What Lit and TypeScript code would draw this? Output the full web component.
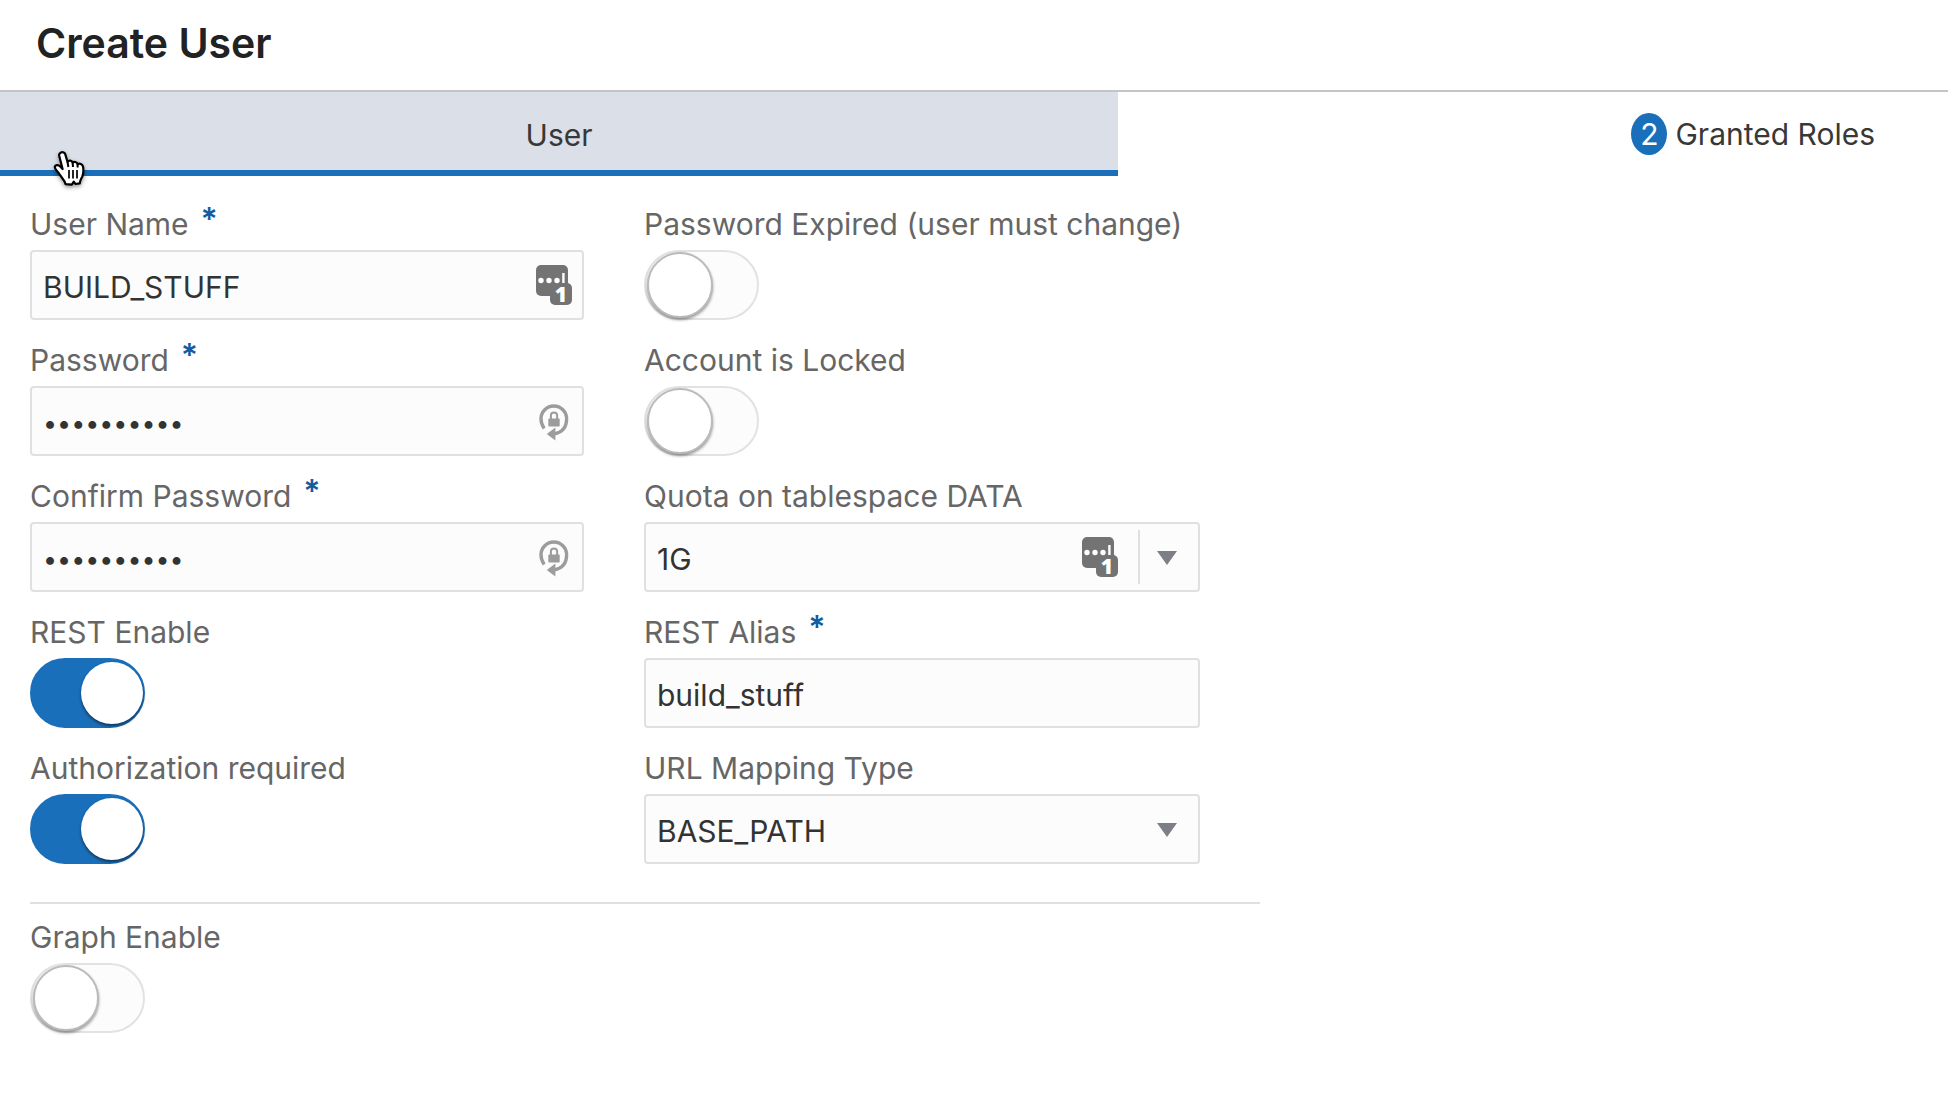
import { LitElement, html, css, svg, nothing } from "lit";
import { customElement, property, state } from "lit/decorators.js";
import { classMap } from "lit/directives/class-map.js";

const countIcon = html`
  <svg class="icon" width="36" height="50" viewBox="0 -5 36 50" aria-hidden="true">
    <rect x="0" y="0" width="32" height="31" rx="5" fill="#737373" />
    <rect x="14" y="18" width="22" height="22" rx="5" fill="#737373" />
    ${[5, 13, 21].map((x) => svg`<circle cx=${x} cy="15.5" r="2.7" fill="#fff" />`)}
    <rect x="26.2" y="8" width="2.4" height="10" fill="#fff" />
    <text class="icon-count" x="25" y="37" text-anchor="middle" fill="#fff">1</text>
  </svg>
`;

const lockIcon = html`
  <svg class="icon" width="36" height="40" viewBox="0 0 36 40" aria-hidden="true">
    <path
      d="M8.2 27.5 C6 24.5 5 21 5 17.8 A12.8 12.8 0 0 1 30.6 17.8 C30.6 26 26 31.5 18 33"
      fill="none"
      stroke="#9c9c9c"
      stroke-width="3.4"
    />
    <path d="M10.8 33 L19.4 26.6 V39.4 Z" fill="#9c9c9c" />
    <path d="M14.9 18 V14.6 A3.1 3.1 0 0 1 21.1 14.6 V18" fill="none" stroke="#9c9c9c" stroke-width="2" />
    <rect x="12.3" y="17.4" width="11.4" height="8.2" rx="1" fill="#9c9c9c" />
  </svg>
`;

const arrowIcon = html`
  <svg class="arrow" width="20" height="14" viewBox="0 0 20 14" aria-hidden="true">
    <path d="M0 0 H20 L10 14 Z" fill="#7c8084" />
  </svg>
`;

type Kind = "text" | "password" | "switch" | "combo" | "select";

@customElement("form-field")
class FormField extends LitElement {
  @property() label = "";
  @property() kind: Kind = "text";
  @property() value = "";
  @property({ type: Boolean }) required = false;
  @property({ type: Boolean }) counted = false;
  @property({ type: Boolean }) checked = false;

  static styles = css`
    :host {
      display: flex;
      flex-direction: column;
      align-items: flex-start;
      gap: 6px;
      min-width: 0;
    }
    .label {
      display: flex;
      gap: 12px;
      font-size: 30px;
      line-height: 40px;
      color: #666;
      white-space: nowrap;
    }
    .star {
      color: #145c9e;
      font-size: 32px;
      font-weight: 600;
      line-height: 32px;
    }
    .box {
      display: flex;
      align-items: center;
      box-sizing: border-box;
      width: 100%;
      height: 70px;
      border: 2px solid #e0e0e0;
      border-radius: 4px;
      background: #fcfcfc;
    }
    .control {
      flex: 1;
      min-width: 0;
      height: 100%;
      box-sizing: border-box;
      padding: 4px 11px 0;
      border: 0;
      outline: 0;
      background: none;
      color: #333;
      font-family: inherit;
      font-size: 30px;
      appearance: none;
    }
    .control[type="password"] {
      font-size: 25px;
    }
    .action {
      display: flex;
      align-items: center;
      justify-content: center;
      padding: 0 10px;
      border: 0;
      background: none;
    }
    .icon-count {
      font-family: "Open Sans", sans-serif;
      font-size: 21px;
      font-weight: 800;
    }
    .combo-icon {
      padding: 0 20px;
    }
    .drop {
      height: 54px;
      width: 60px;
      padding: 2px 4px 0 0;
      border-left: 2px solid #e0e0e0;
    }
    .select-box {
      display: grid;
      grid-template-columns: 1fr 60px;
      align-items: center;
    }
    .select-box .control {
      grid-area: 1 / 1 / 2 / 3;
    }
    .select-box .arrow {
      grid-area: 1 / 2;
      justify-self: center;
      margin: 2px 2px 0 0;
      pointer-events: none;
    }
    .switch {
      appearance: none;
      display: flex;
      align-items: center;
      box-sizing: border-box;
      width: 115px;
      height: 70px;
      margin: 0;
      padding: 0 1px;
      border: 2px solid #e2e2e2;
      border-radius: 35px;
      background: #fcfcfc;
    }
    .switch::before {
      content: "";
      box-sizing: border-box;
      width: 66px;
      height: 66px;
      border: 2px solid #bbb;
      border-radius: 50%;
      background: #fff;
      box-shadow: 0 2px 3px rgba(0, 0, 0, 0.4);
    }
    .switch:checked {
      justify-content: flex-end;
      padding: 0;
      border-color: #1a6fba;
      background: #1a6fba;
    }
    .switch:checked::before {
      width: 62px;
      height: 62px;
      border: 0;
      box-shadow: 0 2px 3px rgba(0, 0, 0, 0.5);
    }
  `;

  private renderControl() {
    switch (this.kind) {
      case "switch":
        return html`<input id="control" class="switch" type="checkbox" role="switch" .checked=${this.checked} />`;
      case "select":
        return html`<div class="box select-box">
          <select id="control" class="control">
            <option>${this.value}</option>
          </select>
          ${arrowIcon}
        </div>`;
      case "combo":
        return html`<div class="box">
          <input id="control" class="control" type="text" role="combobox" aria-expanded="false" .value=${this.value} />
          <button class="action combo-icon" type="button" aria-label="Fill">${countIcon}</button>
          <button class="action drop" type="button" aria-label="Open list">${arrowIcon}</button>
        </div>`;
      default:
        return html`<div class="box">
          <input id="control" class="control" type=${this.kind} .value=${this.value} ?required=${this.required} />
          ${this.kind === "password"
            ? html`<button class="action" type="button" aria-label="Generate">${lockIcon}</button>`
            : this.counted
              ? html`<button class="action" type="button" aria-label="Fill">${countIcon}</button>`
              : nothing}
        </div>`;
    }
  }

  render() {
    return html`
      <label class="label" for="control">
        ${this.label}${this.required ? html`<span class="star">*</span>` : nothing}
      </label>
      ${this.renderControl()}
    `;
  }
}

@customElement("app-root")
class AppRoot extends LitElement {
  @state() private tab = "user";

  static styles = css`
    :host {
      display: block;
      position: relative;
      min-height: 100vh;
      background: #fff;
      color: #333;
      font-family: Inter, "Liberation Sans", sans-serif;
    }
    .header {
      box-sizing: border-box;
      height: 92px;
      padding: 16px 36px 0;
      border-bottom: 2px solid #c4c4c4;
    }
    .title {
      margin: 0;
      color: #222;
      font-size: 41px;
      font-weight: 600;
      line-height: 54px;
    }
    .tabs {
      display: flex;
      height: 84px;
    }
    .tab {
      display: flex;
      align-items: center;
      justify-content: center;
      box-sizing: border-box;
      flex: 1;
      gap: 8px;
      padding: 5px 73px 0 0;
      border: 0;
      border-bottom: 6px solid transparent;
      background: none;
      color: #383838;
      font-family: inherit;
      font-size: 30px;
      line-height: 40px;
    }
    .tab-user {
      flex: 0 0 57.4%;
      padding: 8px 0 0;
    }
    .tab-roles {
      justify-content: flex-end;
    }
    .active {
      border-bottom-color: #1a6fba;
      background: #dbe0e8;
    }
    .badge {
      width: 36px;
      height: 42px;
      border-radius: 50%;
      background: #1a6fba;
      color: #fff;
      line-height: 42px;
      text-align: center;
    }
    .form {
      box-sizing: border-box;
      max-width: 1290px;
      padding: 28px 30px;
    }
    .grid {
      display: grid;
      grid-template-columns: 554fr 556fr;
      gap: 20px 60px;
      padding: 0 60px 38px 0;
      border-bottom: 2px solid #e0e0e0;
    }
    .extra {
      padding-top: 13px;
    }
    .pointer {
      position: absolute;
      left: 52px;
      top: 149px;
      filter: drop-shadow(0 2px 2px rgba(0, 0, 0, 0.4));
      pointer-events: none;
    }
  `;

  render() {
    return html`
      <header class="header"><h1 class="title">Create User</h1></header>
      <nav class="tabs" role="tablist">
        <button
          class=${classMap({ tab: true, "tab-user": true, active: this.tab === "user" })}
          role="tab"
          aria-selected=${this.tab === "user"}
          @click=${() => (this.tab = "user")}
        >
          User
        </button>
        <button
          class=${classMap({ tab: true, "tab-roles": true, active: this.tab === "roles" })}
          role="tab"
          aria-selected=${this.tab === "roles"}
          @click=${() => (this.tab = "roles")}
        >
          <span class="badge">2</span>Granted Roles
        </button>
      </nav>
      <form class="form">
        <div class="grid">
          <form-field label="User Name" value="BUILD_STUFF" required counted></form-field>
          <form-field label="Password Expired (user must change)" kind="switch"></form-field>
          <form-field label="Password" kind="password" value="0123456789" required></form-field>
          <form-field label="Account is Locked" kind="switch"></form-field>
          <form-field label="Confirm Password" kind="password" value="0123456789" required></form-field>
          <form-field label="Quota on tablespace DATA" kind="combo" value="1G"></form-field>
          <form-field label="REST Enable" kind="switch" checked></form-field>
          <form-field label="REST Alias" value="build_stuff" required></form-field>
          <form-field label="Authorization required" kind="switch" checked></form-field>
          <form-field label="URL Mapping Type" kind="select" value="BASE_PATH"></form-field>
        </div>
        <div class="extra">
          <form-field label="Graph Enable" kind="switch"></form-field>
        </div>
      </form>
      <svg class="pointer" width="36" height="38" viewBox="0 0 36 38" aria-hidden="true">
        <path
          d="M9 3.5 C10.8 2.7 12.8 3.6 13.4 5.6 L15.5 13 C16.6 11 19.8 11.2 20.6 13.6 C22 12.2 25 12.8 25.6 15.2 C27.6 14 30.4 15 31 17.4 C31.6 20.5 31.4 24.5 30.4 27.4 C29.4 29.6 28 31 27.8 34.4 L23.4 35 L21.8 32.6 L19.8 35.6 L13.6 35.2 C12.6 31 9.4 28.4 7.4 25.2 C5.6 22.4 2.6 20.4 2.8 17.8 C3.2 15.6 6.4 15.6 8.2 17.4 L10.6 20 L7.2 6.8 C6.9 5.4 7.6 4.1 9 3.5 Z"
          fill="#fff"
          stroke="#000"
          stroke-width="2.2"
          stroke-linejoin="round"
        />
        <path d="M15.5 13 L16.4 18 M20.6 13.6 L21 18 M25.6 15.2 V18.4" stroke="#000" stroke-width="2" />
        <path d="M17 21 V29.5 M21 21 V29.5 M25 21 V29.5" stroke="#000" stroke-width="1.7" />
      </svg>
    `;
  }
}
